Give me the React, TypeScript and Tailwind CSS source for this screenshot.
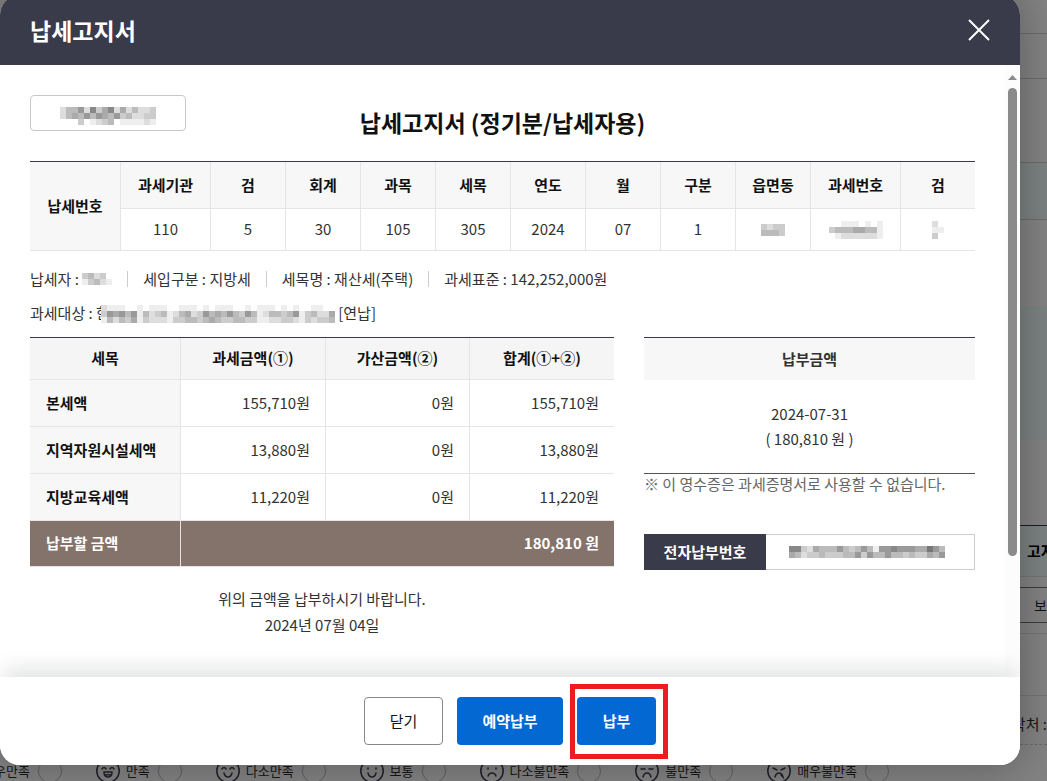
import React, { FC } from "react";

interface MosaicProps {
  rows: string[];
  className?: string;
}

interface TaxRow {
  name: string;
  base: string;
  added: string;
  total: string;
}

const noticeColumns = [
  { label: "과세기관", value: "110" },
  { label: "검", value: "5" },
  { label: "회계", value: "30" },
  { label: "과목", value: "105" },
  { label: "세목", value: "305" },
  { label: "연도", value: "2024" },
  { label: "월", value: "07" },
  { label: "구분", value: "1" },
  { label: "읍면동", mask: ["cdcc", "bbbc"] },
  { label: "과세번호", mask: [".feeefefe", "cbbbaabbe", ".edddddde"] },
  { label: "검", mask: ["df", "ee", "cf"] },
];

const taxRows: TaxRow[] = [
  { name: "본세액", base: "155,710원", added: "0원", total: "155,710원" },
  { name: "지역자원시설세액", base: "13,880원", added: "0원", total: "13,880원" },
  { name: "지방교육세액", base: "11,220원", added: "0원", total: "11,220원" },
];

// mouth and eye strokes of each survey face
const surveyItems = [
  { label: "매우만족", face: "M7 9l2-1 2 1M13 9l2-1 2 1M8 13h8a4 4 0 0 1-8 0z" },
  { label: "만족", face: "M6 10q2-3 4 0M14 10q2-3 4 0M8 13h8q0 5-4 5t-4-5zM10 16q2-1 4 0" },
  { label: "다소만족", face: "M6 10q2-3 4 0M14 10q2-3 4 0M8 14q1 4 4 4t4-4" },
  { label: "보통", face: "M8 9v1M16 9v1M8 14q1 4 4 4t4-4" },
  { label: "다소불만족", face: "M8 9v1M16 9v1M8 17q1-3 4-3t4 3" },
  { label: "불만족", face: "M6 10h4M14 10h4M8 18q1-4 4-4t4 4" },
  { label: "매우불만족", face: "M6 9l4 2M18 9l-4 2M8 18q1-4 4-4t4 4l-2-2" },
];

// each character is one grey cell, a dot is an empty one
const Mosaic: FC<MosaicProps> = ({ rows, className }) => {
  const width = Math.max(...rows.map((row) => row.length)) * 6;
  const height = rows.length * 6;
  return (
    <svg
      width={width}
      height={height}
      viewBox={`0 0 ${width} ${height}`}
      shapeRendering="crispEdges"
      aria-hidden="true"
      className={className}
    >
      {rows.map((row, y) =>
        row.split("").map((c, x) =>
          c === "." ? null : (
            <rect
              key={`${x}-${y}`}
              x={x * 6}
              y={y * 6}
              width={6}
              height={6}
              fill={`#${c}${c}${c}`}
            />
          )
        )
      )}
    </svg>
  );
};

const PageBehind: FC = () => (
  <div className="flex h-screen flex-col overflow-hidden bg-[#828282]" aria-hidden="true">
    <div className="ml-auto flex w-[27px] shrink-0 flex-col text-[15px] whitespace-nowrap text-[#151515]">
      <div className="h-[34px] border-b border-[#6a6a6a]" />
      <div className="h-[45px] border-b border-[#6a6a6a]" />
      <div className="h-[84px] border-b border-[#6a6a6a]" />
      <div className="h-[57px] border-b border-[#6a6a6a] bg-[#7b8280]" />
      <div className="h-[86px]" />
      <div className="h-[134px] bg-[#7b8280]" />
      <div className="h-[85px]" />
      <div className="flex h-[52px] items-center border-y border-t-[#1c1c26] border-b-[#747474] bg-[#7b8280] pl-[7px] font-bold text-black">
        고지
      </div>
      <div className="my-[10px] flex h-[36px] items-center border-y border-[#3c3c3c] pl-[14px] text-[14px]">
        보기
      </div>
      <div className="h-px bg-[#747474]" />
      <div className="h-[62px] border-b border-[#747474]" />
      <div className="flex h-[49px] items-center justify-end border-b border-dashed border-[#686868] pt-2">
        연락처 :
      </div>
      <div className="h-[14px]" />
    </div>
    <div className="-ml-12 flex shrink-0 text-[13px] text-[#151515]">
      {surveyItems.map((item) => (
        <label key={item.label} className="mr-[34px] flex h-6 items-center whitespace-nowrap">
          <svg
            width="24"
            height="24"
            viewBox="0 0 24 24"
            fill="none"
            stroke="#20202a"
            strokeWidth="1.5"
            strokeLinecap="round"
            className="mr-[6px]"
          >
            <circle cx="12" cy="12" r="11.2" />
            <path d={item.face} />
          </svg>
          {item.label}
          <input
            type="radio"
            name="survey"
            tabIndex={-1}
            className="ml-2 size-6 appearance-none rounded-full border border-[#606060]"
          />
        </label>
      ))}
    </div>
  </div>
);

const NoticeTable: FC = () => (
  <table className="w-full table-fixed border-separate border-spacing-0 border-t border-[#3a3b4a] text-center">
    <colgroup>
      <col className="w-[90px]" />
      <col className="w-[90px]" />
      <col span={8} className="w-[75px]" />
      <col className="w-[90px]" />
      <col className="w-[75px]" />
    </colgroup>
    <thead>
      <tr className="h-[47px] bg-[#f7f7f7] text-[#111]">
        <th rowSpan={2} className="border-b border-[#e5e5e5] p-0 font-bold">
          납세번호
        </th>
        {noticeColumns.map((col, i) => (
          <th key={i} className="border-b border-l border-[#e5e5e5] p-0 font-bold">
            {col.label}
          </th>
        ))}
      </tr>
      <tr className="h-[42px]">
        {noticeColumns.map((col, i) => (
          <td key={i} className="border-b border-l border-[#e5e5e5] p-0">
            {col.mask ? <Mosaic rows={col.mask} className="mx-auto" /> : col.value}
          </td>
        ))}
      </tr>
    </thead>
  </table>
);

const TaxTable: FC = () => (
  <table className="w-full table-fixed border-separate border-spacing-0 border-t border-[#3a3b4a]">
    <colgroup>
      <col className="w-[150px]" />
      <col className="w-[145px]" />
      <col className="w-[144px]" />
      <col className="w-[145px]" />
    </colgroup>
    <thead>
      <tr className="h-[42px] bg-[#f5f5f5] text-[#111]">
        <th className="border-b border-[#e5e5e5] p-0 font-bold">세목</th>
        <th className="border-b border-l border-[#e5e5e5] p-0 font-bold">과세금액(①)</th>
        <th className="border-b border-l border-[#e5e5e5] p-0 font-bold">가산금액(②)</th>
        <th className="border-b border-l border-[#e5e5e5] p-0 font-bold">합계(①+②)</th>
      </tr>
    </thead>
    <tbody>
      {taxRows.map((row) => (
        <tr key={row.name} className="h-[47px] text-right">
          <th className="border-b border-[#e5e5e5] bg-[#f7f7f7] p-0 pl-4 text-left font-bold text-[#111]">
            {row.name}
          </th>
          <td className="border-b border-l border-[#e5e5e5] p-0 pr-[15px]">{row.base}</td>
          <td className="border-b border-l border-[#e5e5e5] p-0 pr-[15px]">{row.added}</td>
          <td className="border-b border-l border-[#e5e5e5] p-0 pr-[15px]">{row.total}</td>
        </tr>
      ))}
    </tbody>
    <tfoot>
      <tr className="h-[46px] bg-[#84736b] font-bold text-white">
        <th className="border-b border-[#e5e5e5] p-0 pl-4 text-left">납부할 금액</th>
        <td colSpan={3} className="border-b border-l border-[#e5e5e5] p-0 pr-[15px] text-right">
          180,810 원
        </td>
      </tr>
    </tfoot>
  </table>
);

const PaymentPanel: FC = () => (
  <section>
    <div className="border-t border-b border-t-[#3a3b4a] border-b-[#555]">
      <h3 className="bg-[#f7f7f7] text-center leading-[42px] font-bold">납부금액</h3>
      <p className="pt-[21px] pb-[22px] text-center leading-[25px]">
        2024-07-31
        <br />( 180,810 원 )
      </p>
    </div>
    <p className="leading-5 whitespace-nowrap text-[#666]">
      ※ 이 영수증은 과세증명서로 사용할 수 없습니다.
    </p>
    <dl className="mt-10 flex h-9">
      <dt className="flex w-[122px] items-center justify-center bg-[#3a3b4a] font-bold text-white">
        전자납부번호
      </dt>
      <dd className="flex flex-1 items-center border border-l-0 border-[#ccc] pl-[17px]">
        <Mosaic rows={["f88cdabbb9bcb9be998999aa79b", "fabdccbcccbb9c9bb9bbcbccab9"]} />
      </dd>
    </dl>
  </section>
);

const App: FC = () => {
  return (
    <div className="relative overflow-hidden font-['Noto_Sans_CJK_KR','Noto_Sans',sans-serif] text-[15px] text-[#333]">
      <PageBehind />
      <div
        role="dialog"
        aria-labelledby="notice-title"
        className="absolute -top-[5px] right-[27px] bottom-4 left-0 flex flex-col overflow-hidden rounded-[20px] bg-white shadow-[0_0_40px_rgba(0,0,0,0.3)]"
      >
        <header className="flex h-[70px] shrink-0 items-center justify-between bg-[#3a3b4a] px-[30px] text-white">
          <h1 id="notice-title" className="text-[23px] font-bold">
            납세고지서
          </h1>
          <button type="button" aria-label="닫기">
            <svg width="22" height="22" viewBox="0 0 22 22" stroke="currentColor" strokeWidth="2">
              <path d="M1 1l20 20M21 1L1 21" />
            </svg>
          </button>
        </header>

        <div className="flex min-h-0 flex-1">
          <main className="flex-1 overflow-hidden px-[30px] pt-[30px]">
            <div className="grid h-[66px]">
              <button
                type="button"
                aria-label="기관"
                className="col-start-1 row-start-1 flex h-9 w-[156px] items-center justify-center rounded border border-[#c8c8c8]"
              >
                <Mosaic
                  rows={[".ff.........f.f.", "dbb9d8ca8dadbddc", "dbab9b9ab9cbddcc", ".f.cfedcbfeeeede"]}
                />
              </button>
              <h2 className="col-start-1 row-start-1 mt-[9px] justify-self-center text-[23px] leading-9 font-bold text-[#111]">
                납세고지서 (정기분/납세자용)
              </h2>
            </div>

            <NoticeTable />

            <ul className="mt-[10px] flex h-[35px] items-center divide-x divide-[#ccc] leading-4 whitespace-nowrap">
              <li className="flex pr-[15px]">
                납세자 :&nbsp;
                <Mosaic rows={["cbdcf", "ecbde"]} className="mt-[2px]" />
              </li>
              <li className="px-[15px]">세입구분 : 지방세</li>
              <li className="px-[15px]">세목명 : 재산세(주택)</li>
              <li className="px-[15px]">과세표준 : 142,252,000원</li>
            </ul>
            <p className="mb-[6px] flex h-[35px] items-center whitespace-nowrap">
              과세대상 : 한
              <Mosaic
                className="-ml-[9px]"
                rows={[
                  "deeeffefeeeffeeefefeeeffefeeefefeffeeff",
                  "c9a9b9ebdcbedbadc9bab9bc9bedbbcb9ecbdda",
                  "ebdbcaecdddeccbbcbabccbbcceeddccdecdccb",
                ]}
              />
              &nbsp;[연납]
            </p>

            <div className="grid grid-cols-[584fr_331fr] gap-[30px]">
              <section>
                <TaxTable />
                <p className="mt-[19px] text-center leading-[26px]">
                  위의 금액을 납부하시기 바랍니다.
                  <br />
                  2024년 07월 04일
                </p>
              </section>
              <PaymentPanel />
            </div>
          </main>

          <div className="flex w-[15px] shrink-0 flex-col items-center bg-[#fcfcfc] pt-[10px]" aria-hidden="true">
            <svg width="9" height="5" viewBox="0 0 9 5" fill="#8b8b8b">
              <path d="M4.500 0L9 5H0z" />
            </svg>
            <div className="mt-2 h-[468px] w-[9px] rounded-full bg-[#8b8b8b]" />
          </div>
        </div>

        <footer className="relative flex h-[88px] shrink-0 items-center justify-center gap-[14px] bg-white shadow-[0_-14px_18px_-4px_rgba(20,35,30,0.11)]">
          <button type="button" className="h-12 w-[79px] rounded border border-[#888] text-[#111]">
            닫기
          </button>
          <button type="button" className="h-12 w-[106px] rounded bg-[#0468d2] font-bold text-white">
            예약납부
          </button>
          <div className="relative">
            <button type="button" className="h-12 w-[79px] rounded bg-[#0468d2] font-bold text-white">
              납부
            </button>
            <span className="pointer-events-none absolute -top-[13px] -right-3 -bottom-[14px] -left-[7px] border-5 border-[#ed1c24]" />
          </div>
        </footer>
      </div>
    </div>
  );
};

export default App;
